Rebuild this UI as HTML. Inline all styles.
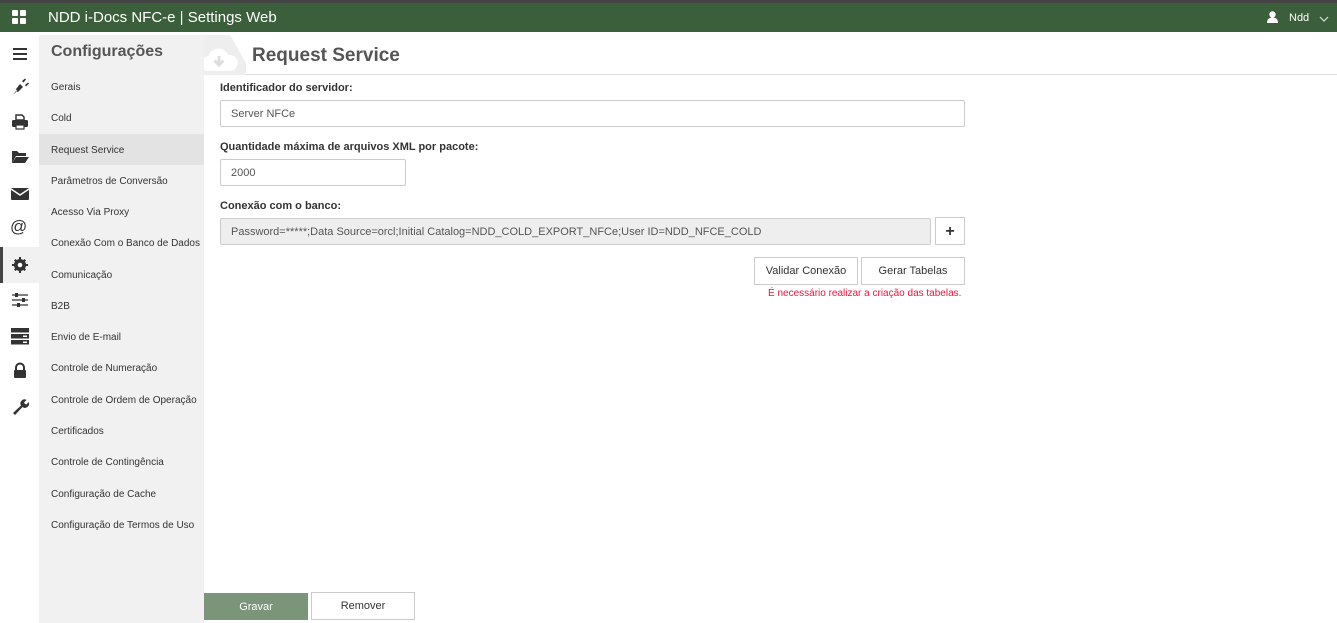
<!DOCTYPE html>
<html><head><meta charset="utf-8"><style>
*{box-sizing:border-box;margin:0;padding:0}
body{width:1337px;height:623px;overflow:hidden;background:#fff;font-family:"Liberation Sans",sans-serif;color:#333;position:relative}
.top{position:absolute;left:0;top:0;width:1337px;height:3px;background:#444}
.bar{position:absolute;left:0;top:3px;width:1337px;height:29px;background:#3b5e3b;color:#fff}
.bar .t{position:absolute;left:48px;top:6px;font-size:15px}
.bar .u{position:absolute;left:1289px;top:9px;font-size:11px}
.rail{position:absolute;left:0;top:35px;width:39px;height:588px;background:#fff}
.ic{position:absolute;left:11px;width:18px;height:18px;color:#333}
.side{position:absolute;left:39px;top:35px;width:165px;height:588px;background:#f1f1f1}
.side h2{font-size:16px;font-weight:bold;color:#555;position:absolute;left:12px;top:8px}
.side .it{position:absolute;left:0;width:165px;height:31px;line-height:33px;padding-left:12px;font-size:10px;color:#333}
.side .act{background:#e3e3e3}
.hdr{position:absolute;left:204px;top:35px;width:1133px;height:40px;border-bottom:1px solid #ddd}
.hdr h1{position:absolute;left:48px;top:10px;font-size:19px;font-weight:bold;color:#555}
.lbl{position:absolute;left:220px;font-size:11px;font-weight:bold;color:#333;margin-top:1px}
.inp{position:absolute;left:220px;height:27px;border:1px solid #ccc;border-radius:2px;font-size:11px;color:#555;padding-left:10px;line-height:27px;background:#fff}
.btn{position:absolute;height:28px;border:1px solid #ccc;background:#fff;font-size:11px;text-align:center;line-height:27px;color:#333}
</style></head><body>
<div class="top"></div>
<div class="bar">
<svg style="position:absolute;left:12px;top:7px" width="15" height="14" viewBox="0 0 15 14" fill="#fff"><rect x="0" y="0" width="6" height="6" rx="1"/><rect x="8" y="0" width="6" height="6" rx="1"/><rect x="0" y="8" width="6" height="6" rx="1"/><rect x="8" y="8" width="6" height="6" rx="1"/></svg>
<div class="t">NDD i-Docs NFC-e | Settings Web</div>
<svg style="position:absolute;left:1267px;top:8px" width="11" height="12" viewBox="0 0 11 12" fill="#fff"><circle cx="5.5" cy="3.5" r="3.2"/><path d="M0 12 Q0 6.5 5.5 6.5 Q11 6.5 11 12Z"/></svg>
<div class="u">Ndd</div>
<svg style="position:absolute;left:1319px;top:13px" width="10" height="6" viewBox="0 0 10 6"><path d="M1 1L5 5L9 1" stroke="#ddd" fill="none" stroke-width="1.2"/></svg>
</div>
<div class="rail">
<svg class="ic" style="top:10px" viewBox="0 0 18 18"><path d="M2 4h14M2 9h14M2 14h14" stroke="#333" stroke-width="2"/></svg>
<svg class="ic" style="top:43px" viewBox="0 0 18 18" fill="#333"><path d="M3 16L6 13L5 11L9 6L12 9L7 14L5 13L2 17Z"/><path d="M11 3L14 0.5L15 1.5L12.5 4.5ZM14 7L17 4.5L18 5.5L15 8.5Z"/></svg>
<svg class="ic" style="top:78px" viewBox="0 0 18 18" fill="#333"><path d="M5 2h6l2 2v3H5z" fill="none" stroke="#333" stroke-width="1.5"/><rect x="1" y="7" width="16" height="7" rx="1.5"/><rect x="5" y="12" width="8" height="4" fill="#fff" stroke="#333" stroke-width="1.2"/></svg>
<svg class="ic" style="top:113px" viewBox="0 0 18 18" fill="#333"><path d="M1 3h5l2 2h7v3H5L1 15z"/><path d="M5 9h13l-4 6H1z"/></svg>
<svg class="ic" style="top:150px" viewBox="0 0 18 18" fill="#333"><rect x="0" y="3" width="18" height="12" rx="1"/><path d="M0 4L9 10L18 4" stroke="#fff" stroke-width="1.5" fill="none"/></svg>
<div class="ic" style="top:183px;font-size:17px;left:10px;line-height:18px">@</div>
<div style="position:absolute;left:0;top:212px;width:39px;height:36px;background:#f1f1f1;border-left:3px solid #444"></div>
<svg class="ic" style="top:221px" viewBox="0 0 18 18" fill="#333"><circle cx="9" cy="9" r="6"/><path d="M8 1h2v3H8zM8 14h2v3H8zM1 8h3v2H1zM14 8h3v2h-3zM3 4.5l1.5-1.5 2 2-1.5 1.5zM11.5 13l1.5-1.5 2 2-1.5 1.5zM3 13.5l2-2 1.5 1.5-2 2zM11.5 5l2-2 1.5 1.5-2 2z"/><circle cx="9" cy="9" r="2.3" fill="#fff"/></svg>
<svg class="ic" style="top:256px" viewBox="0 0 18 18"><path d="M1 4h16M1 9h16M1 14h16" stroke="#333" stroke-width="1.3"/><rect x="4" y="2" width="3" height="4" fill="#333"/><rect x="11" y="7" width="3" height="4" fill="#333"/><rect x="6" y="12" width="3" height="4" fill="#333"/></svg>
<svg class="ic" style="top:292px" viewBox="0 0 18 18" fill="#333"><rect x="0" y="1" width="18" height="4.5"/><rect x="0" y="7" width="18" height="4.5"/><rect x="0" y="13" width="18" height="4.5"/><rect x="12" y="8.5" width="4" height="1.5" fill="#fff"/><rect x="12" y="14.5" width="4" height="1.5" fill="#fff"/></svg>
<svg class="ic" style="top:327px" viewBox="0 0 18 18" fill="#333"><path d="M5 8V5.5a4 4 0 0 1 8 0V8" fill="none" stroke="#333" stroke-width="2"/><rect x="3" y="8" width="12" height="8" rx="1"/></svg>
<svg class="ic" style="top:363px" viewBox="0 0 18 18" fill="#333"><path d="M2 15L10 7.5A4 4 0 0 1 15.5 2L13 4.5L14 6L15.5 6.5L17.5 4A4 4 0 0 1 11.5 9L4 17Z"/></svg>
</div>
<div class="side">
<h2>Configurações</h2>
<div class="it" style="top:36px">Gerais</div>
<div class="it" style="top:67px">Cold</div>
<div class="it act" style="top:99px">Request Service</div>
<div class="it" style="top:130px">Parâmetros de Conversão</div>
<div class="it" style="top:161px">Acesso Via Proxy</div>
<div class="it" style="top:192px">Conexão Com o Banco de Dados</div>
<div class="it" style="top:224px">Comunicação</div>
<div class="it" style="top:255px">B2B</div>
<div class="it" style="top:286px">Envio de E-mail</div>
<div class="it" style="top:317px">Controle de Numeração</div>
<div class="it" style="top:349px">Controle de Ordem de Operação</div>
<div class="it" style="top:380px">Certificados</div>
<div class="it" style="top:411px">Controle de Contingência</div>
<div class="it" style="top:443px">Configuração de Cache</div>
<div class="it" style="top:474px">Configuração de Termos de Uso</div>
</div>
<div class="hdr">
<svg style="position:absolute;left:0;top:0" width="42" height="40" viewBox="0 0 42 40"><path d="M0 0H26L42 28V40H0Z" fill="#eee"/><path d="M2 36a8 8 0 0 1 3-15a10 10 0 0 1 19-1a8 8 0 0 1 3 16Z" fill="#fff"/><path d="M15 21v9M10.5 25.5l4.5 4.5 4.5-4.5" stroke="#ddd" stroke-width="3" fill="none"/></svg>
<h1>Request Service</h1>
</div>
<div class="lbl" style="top:81px">Identificador do servidor:</div>
<div class="inp" style="top:100px;width:745px">Server NFCe</div>
<div class="lbl" style="top:140px">Quantidade máxima de arquivos XML por pacote:</div>
<div class="inp" style="top:159px;width:186px">2000</div>
<div class="lbl" style="top:199px">Conexão com o banco:</div>
<div class="inp" style="top:218px;width:711px;background:#eee">Password=*****;Data Source=orcl;Initial Catalog=NDD_COLD_EXPORT_NFCe;User ID=NDD_NFCE_COLD</div>
<div class="btn" style="left:935px;top:217px;width:30px;font-size:16px;font-weight:bold">+</div>
<div class="btn" style="left:754px;top:257px;width:104px">Validar Conexão</div>
<div class="btn" style="left:861px;top:257px;width:104px">Gerar Tabelas</div>
<div style="position:absolute;left:768px;top:288px;font-size:10px;color:#e8173c">É necessário realizar a criação das tabelas.</div>
<div class="btn" style="left:204px;top:593px;width:104px;background:#7a957a;border-color:#7a957a;color:#fff;height:27px">Gravar</div>
<div class="btn" style="left:311px;top:592px;width:104px">Remover</div>
</body></html>
